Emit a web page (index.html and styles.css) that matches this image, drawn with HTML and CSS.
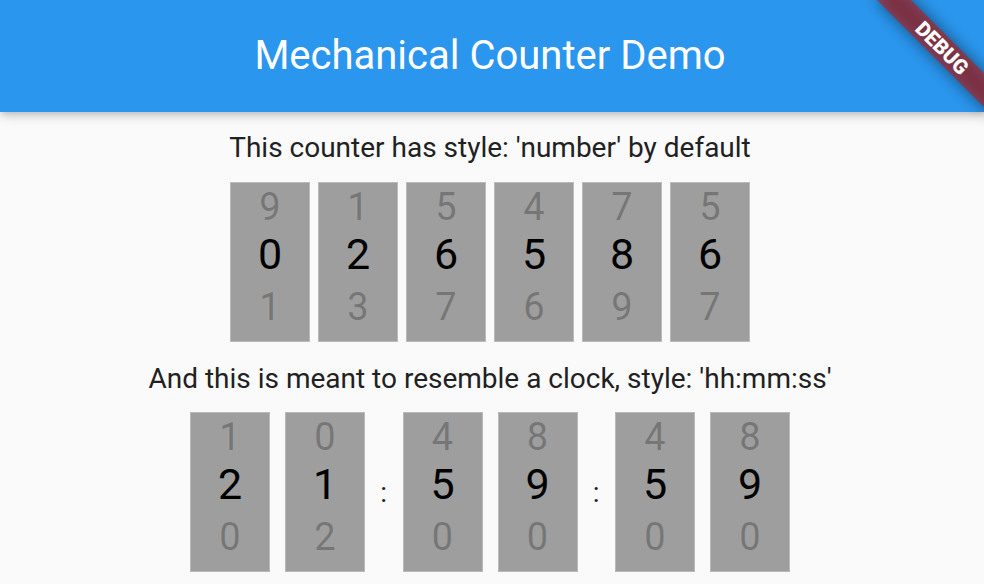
FILE: index.html
```html
<!DOCTYPE html>
<html lang="en">
<head>
<meta charset="utf-8">
<title>Mechanical Counter Demo</title>
<link rel="stylesheet" href="styles.css">
</head>
<body>
<header class="appbar">
  <h1 class="title">Mechanical Counter Demo</h1>
</header>
<main class="content">
  <p class="caption caption-number">This counter has style: 'number' by default</p>
  <div class="counter counter-number">
    <div class="wheel"><span class="d prev">9</span><span class="d cur">0</span><span class="d next">1</span></div>
    <div class="wheel"><span class="d prev">1</span><span class="d cur">2</span><span class="d next">3</span></div>
    <div class="wheel"><span class="d prev">5</span><span class="d cur">6</span><span class="d next">7</span></div>
    <div class="wheel"><span class="d prev">4</span><span class="d cur">5</span><span class="d next">6</span></div>
    <div class="wheel"><span class="d prev">7</span><span class="d cur">8</span><span class="d next">9</span></div>
    <div class="wheel"><span class="d prev">5</span><span class="d cur">6</span><span class="d next">7</span></div>
  </div>
  <p class="caption caption-clock">And this is meant to resemble a clock, style: 'hh:mm:ss'</p>
  <div class="counter counter-clock">
    <div class="wheel"><span class="d prev">1</span><span class="d cur">2</span><span class="d next">0</span></div>
    <div class="wheel"><span class="d prev">0</span><span class="d cur">1</span><span class="d next">2</span></div>
    <span class="sep">:</span>
    <div class="wheel"><span class="d prev">4</span><span class="d cur">5</span><span class="d next">0</span></div>
    <div class="wheel"><span class="d prev">8</span><span class="d cur">9</span><span class="d next">0</span></div>
    <span class="sep">:</span>
    <div class="wheel"><span class="d prev">4</span><span class="d cur">5</span><span class="d next">0</span></div>
    <div class="wheel"><span class="d prev">8</span><span class="d cur">9</span><span class="d next">0</span></div>
  </div>
</main>
<div class="debug-banner">
  <div class="banner-shadow"></div>
  <div class="banner-band">DEBUG</div>
</div>
</body>
</html>
```

FILE: styles.css
```css
html, body {
  margin: 0;
  padding: 0;
}

body {
  width: 984px;
  height: 584px;
  overflow: hidden;
  position: relative;
  background: #fafafa;
  font-family: Roboto, "Noto Sans", "Liberation Sans", sans-serif;
}

.appbar {
  position: relative;
  z-index: 1;
  height: 112px;
  padding-right: 4px;
  background: #2a96ee;
  display: flex;
  align-items: center;
  justify-content: center;
  box-shadow: 0 3px 6px -2px rgba(0, 0, 0, 0.16), 0 6px 8px 0 rgba(0, 0, 0, 0.08), 0 2px 16px 0 rgba(0, 0, 0, 0.08);
}

.title {
  margin: 0;
  font-size: 40px;
  font-weight: 400;
  line-height: 48px;
  color: #ffffff;
}

.content {
  padding: 19px 4px 0 0;
  display: flex;
  flex-direction: column;
  align-items: center;
}

.caption {
  margin: 0;
  font-size: 28px;
  line-height: 33px;
  color: #212121;
}

.counter {
  display: flex;
  align-items: center;
}

.counter-number {
  margin-top: 18px;
  gap: 8px;
}

.caption-clock {
  margin-top: 20px;
}

.counter-clock {
  margin-top: 17px;
  gap: 15px;
}

.wheel {
  width: 80px;
  height: 160px;
  box-sizing: border-box;
  background: #9e9e9e;
  border: 1px solid #b9b9b9;
  display: flex;
  flex-direction: column;
  align-items: center;
}

.d {
  display: block;
  text-align: center;
  color: rgba(0, 0, 0, 0.25);
}

.prev {
  font-size: 38px;
  line-height: 49px;
}

.cur {
  font-size: 43px;
  line-height: 44px;
  color: #000000;
}

.next {
  font-size: 38px;
  line-height: 62px;
}

.sep {
  width: 7.5px;
  text-align: center;
  font-size: 28px;
  line-height: 33px;
  color: #212121;
}

.debug-banner {
  position: absolute;
  z-index: 5;
  left: 862px;
  top: 36px;
  width: 160px;
  height: 24px;
  transform: rotate(45deg);
  pointer-events: none;
}

.banner-shadow {
  position: absolute;
  inset: 0;
  background: rgba(0, 0, 0, 0.5);
  filter: blur(8px);
}

.banner-band {
  position: absolute;
  inset: 0;
  background: rgba(183, 28, 28, 0.627);
  color: #ffffff;
  font-size: 20.4px;
  font-weight: 900;
  line-height: 24px;
  text-align: center;
}
```
